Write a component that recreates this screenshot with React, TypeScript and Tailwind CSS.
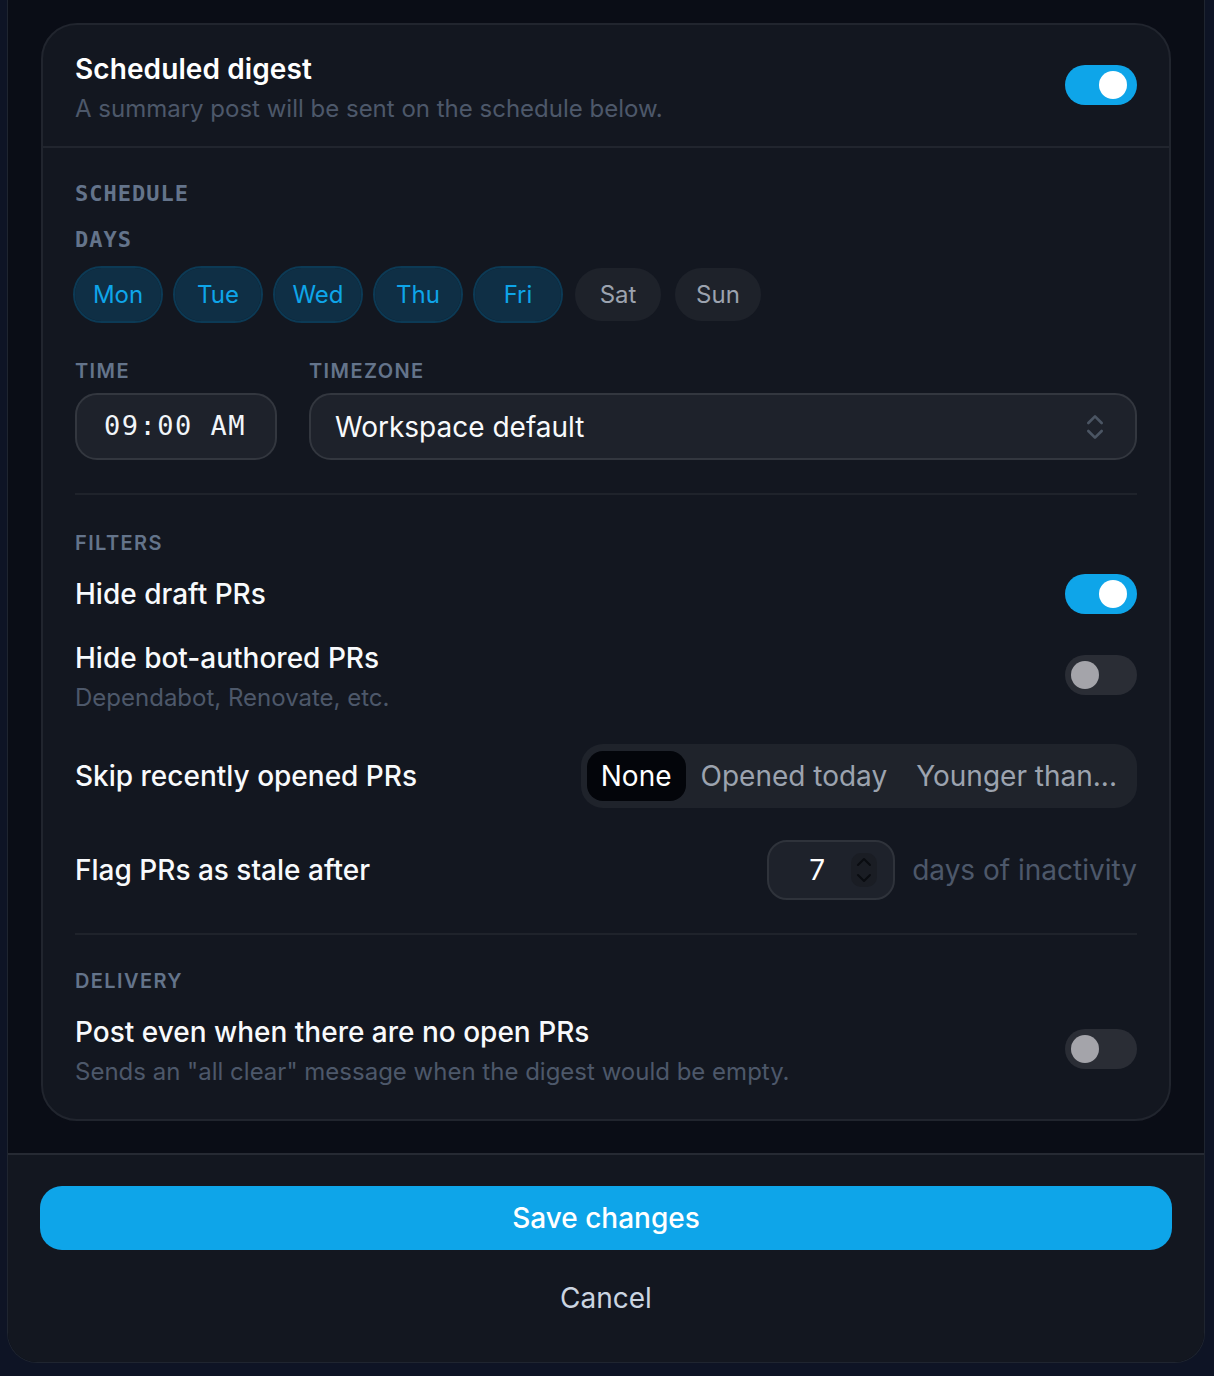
import { ChevronsUpDown } from 'lucide-react'

const days = [
  { label: 'Mon', on: true },
  { label: 'Tue', on: true },
  { label: 'Wed', on: true },
  { label: 'Thu', on: true },
  { label: 'Fri', on: true },
  { label: 'Sat', on: false },
  { label: 'Sun', on: false },
]

function Toggle({ on }: { on: boolean }) {
  return (
    <div
      className={`relative h-[40px] w-[72px] shrink-0 rounded-full ${
        on ? 'bg-[#0ea5e9]' : 'bg-[#2a2d35]'
      }`}
    >
      <span
        className={`absolute top-[6px] h-[28px] w-[28px] rounded-full ${
          on ? 'left-[34px] bg-white' : 'left-[6px] bg-[#a4a4aa]'
        }`}
      />
    </div>
  )
}

function SectionLabel({ children, mono }: { children: string; mono?: boolean }) {
  if (mono) {
    return (
      <div className="font-['DejaVu_Sans_Mono',monospace] text-[22px] font-bold leading-[28px] tracking-[1px] text-[#64748b]">
        {children}
      </div>
    )
  }
  return (
    <div className="text-[20px] font-semibold leading-[28px] tracking-[1.4px] text-[#64748b]">{children}</div>
  )
}

function Spinner() {
  return (
    <div className="flex h-[34px] w-[26px] items-center justify-center rounded-[10px] bg-[#1a1d24]">
      <svg width="16" height="30" viewBox="0 0 16 30" fill="none" stroke="#0a0c11" strokeWidth="2" strokeLinecap="round" strokeLinejoin="round">
        <path d="M2 10 8 4l6 6" />
        <path d="M2 20l6 6 6-6" />
      </svg>
    </div>
  )
}

export default function App() {
  return (
    <div className="min-h-screen bg-[#0e1425] font-['Inter',sans-serif]">
      <div className="ml-[7px] w-[1198px] overflow-hidden rounded-b-[30px] border-x border-b border-[#1f2530] bg-[#0a0d16]">
        {/* scroll area */}
        <div className="px-[33px] pb-[32px] pt-[23px]">
          <div className="rounded-[36px] border-2 border-[#21252e] bg-[#131720]">
            {/* header */}
            <div className="flex items-center justify-between border-b-2 border-[#21252e] px-[32px] pb-[21px] pt-[26px]">
              <div>
                <div className="text-[28px] font-semibold leading-[36px] tracking-[0.1px] text-white">Scheduled digest</div>
                <div className="mt-[6px] text-[24px] leading-[32px] text-[#4d586a]">
                  A summary post will be sent on the schedule below.
                </div>
              </div>
              <div className="mb-[6px]">
                <Toggle on />
              </div>
            </div>

            {/* body */}
            <div className="px-[32px] pb-[31px] pt-[32px]">
              <SectionLabel mono>SCHEDULE</SectionLabel>
              <div className="mt-[18px]">
                <SectionLabel mono>DAYS</SectionLabel>
              </div>
              <div className="-ml-[2px] mt-[12px] flex gap-[10px]">
                {days.map((d) => (
                  <div
                    key={d.label}
                    className={`flex h-[57px] w-[90px] items-center justify-center rounded-full border-2 bg-clip-padding text-[24px] ${
                      d.on
                        ? 'border-[#0c3a55] bg-[#0f2f45] text-[#0ea5e9]'
                        : 'border-transparent bg-[#1e222a] text-[#9ca3af]'
                    }`}
                  >
                    {d.label}
                  </div>
                ))}
              </div>

              <div className="mt-[34px] flex gap-[32px]">
                <div className="w-[202px]">
                  <SectionLabel>TIME</SectionLabel>
                  <div className="mt-[8px] flex h-[67px] items-center rounded-[22px] border-2 border-[#33373f] bg-[#1e222b] pl-[27px] font-['DejaVu_Sans_Mono',monospace] text-[27px] tracking-[1.5px] text-[#f1f5f9]">
                    09:00 AM
                  </div>
                </div>
                <div className="flex-1">
                  <SectionLabel>TIMEZONE</SectionLabel>
                  <div className="mt-[8px] flex h-[67px] items-center justify-between rounded-[22px] border-2 border-[#33373f] bg-[#1e222b] pl-[24px] pr-[24px] text-[28px] text-[#f8fafc]">
                    <span>Workspace default</span>
                    <ChevronsUpDown size={32} strokeWidth={2} className="text-[#4b5563]" />
                  </div>
                </div>
              </div>

              <div className="mt-[33px] h-[2px] bg-[#1f232b]" />

              <div className="mt-[34px]">
                <SectionLabel>FILTERS</SectionLabel>
              </div>

              <div className="mt-[17px] flex h-[40px] items-center justify-between">
                <span className="text-[28px] font-medium leading-[36px] text-[#f8fafc]">Hide draft PRs</span>
                <Toggle on />
              </div>

              <div className="mt-[26px] flex items-center justify-between">
                <div>
                  <div className="text-[28px] font-medium leading-[36px] text-[#f8fafc]">Hide bot-authored PRs</div>
                  <div className="mt-[6px] text-[24px] leading-[32px] text-[#4d586a]">Dependabot, Renovate, etc.</div>
                </div>
                <div className="mb-[4px]">
                  <Toggle on={false} />
                </div>
              </div>

              <div className="mt-[30px] flex items-center justify-between">
                <span className="text-[28px] font-medium leading-[36px] text-[#f8fafc]">Skip recently opened PRs</span>
                <div className="flex h-[64px] items-center gap-[1px] rounded-[22px] bg-[#1f232b] p-[6px] text-[28px]">
                  <div className="flex h-[50px] items-center rounded-[16px] bg-[#03050a] px-[14px] text-white">None</div>
                  <div className="flex h-[50px] items-center px-[14px] text-[#9ca3af]">Opened today</div>
                  <div className="flex h-[50px] items-center px-[14px] text-[#9ca3af]">Younger than...</div>
                </div>
              </div>

              <div className="mt-[32px] flex items-center justify-between">
                <span className="text-[28px] font-medium leading-[36px] text-[#f8fafc]">Flag PRs as stale after</span>
                <div className="flex items-center gap-[17px]">
                  <div className="flex h-[60px] w-[128px] items-center justify-between rounded-[20px] border-2 border-[#2f333b] bg-[#1e222b] pl-[40px] pr-[16px] text-[28px] text-white">
                    <span>7</span>
                    <Spinner />
                  </div>
                  <span className="text-[28px] text-[#4d586a]">days of inactivity</span>
                </div>
              </div>

              <div className="mt-[33px] h-[2px] bg-[#1f232b]" />

              <div className="mt-[32px]">
                <SectionLabel>DELIVERY</SectionLabel>
              </div>

              <div className="mt-[19px] flex items-center justify-between">
                <div>
                  <div className="text-[28px] font-medium leading-[36px] text-[#f8fafc]">Post even when there are no open PRs</div>
                  <div className="mt-[6px] text-[24px] leading-[32px] text-[#4d586a]">
                    Sends an "all clear" message when the digest would be empty.
                  </div>
                </div>
                <div className="mb-[4px]">
                  <Toggle on={false} />
                </div>
              </div>
            </div>
          </div>
        </div>

        {/* footer */}
        <div className="border-t-2 border-[#262a33] bg-[#131720] px-[32px] pb-[32px] pt-[31px]">
          <button className="flex h-[64px] w-full items-center justify-center rounded-[22px] bg-[#0ea5e9] text-[28px] font-medium text-white">
            Save changes
          </button>
          <button className="mt-[16px] flex h-[64px] w-full items-center justify-center text-[28px] text-[#cbd5e1]">
            Cancel
          </button>
        </div>
      </div>
    </div>
  )
}
